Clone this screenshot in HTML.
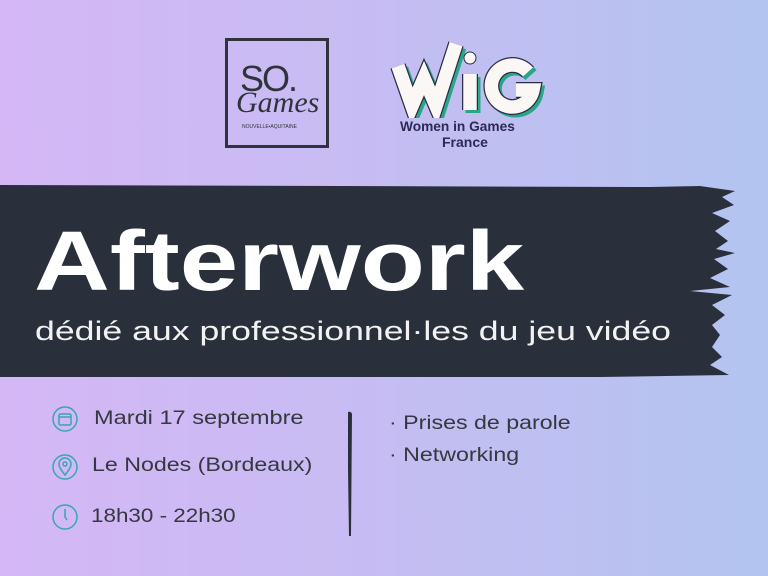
<!DOCTYPE html>
<html><head><meta charset="utf-8"><style>
*{margin:0;padding:0;box-sizing:border-box}
body{width:768px;height:576px;overflow:hidden;position:relative;font-family:"Liberation Sans",sans-serif;background:linear-gradient(90deg,#d5b7f6 0%,#c7bcf3 45%,#b3c4f0 100%)}
.a{position:absolute;white-space:nowrap;transform-origin:0 50%}
.t{color:#363840;font-size:19px;transform:scaleX(1.22)}
</style></head><body>
<!-- SO Games logo -->
<div class="a" style="left:225px;top:38px;width:104px;height:110px;border:3px solid #30333b"></div>
<div class="a" style="left:240px;top:58px;font-size:36px;color:#30333b;letter-spacing:-2px">SO.</div>
<div class="a" style="left:236px;top:86px;font-family:'Liberation Serif',serif;font-style:italic;font-size:30px;color:#30333b">Games</div>
<div class="a" style="left:242px;top:124px;font-size:5px;color:#30333b">NOUVELLE•AQUITAINE</div>
<!-- WiG logo -->
<svg class="a" style="left:388px;top:38px" width="160" height="80" viewBox="0 0 160 80" fill="none" stroke-linejoin="miter" stroke-linecap="butt">
<g stroke="#27a688" stroke-width="15" transform="translate(3,3)">
<polyline points="10,28 24,68 36,40 48,68 68,6"/><line x1="82" y1="36" x2="82" y2="72"/><path d="M140 34 A21 21 0 1 0 145 52 H128"/></g>
<g stroke="#2b2d45" stroke-width="16">
<polyline points="10,28 24,68 36,40 48,68 68,6"/><line x1="82" y1="36" x2="82" y2="72"/><path d="M140 34 A21 21 0 1 0 145 52 H128"/></g>
<g stroke="#fbf7f5" stroke-width="13.5">
<polyline points="10,28 24,68 36,40 48,68 68,6"/><line x1="82" y1="36" x2="82" y2="72"/><path d="M140 34 A21 21 0 1 0 145 52 H128"/></g>
<circle cx="82" cy="20" r="6" fill="#fbf7f5" stroke="#2b2d45" stroke-width="1"/>
</svg>
<div class="a" style="left:400px;top:118px;font-size:14px;font-weight:bold;color:#2b2a55;transform:scaleX(0.98)">Women in Games</div>
<div class="a" style="left:442px;top:134px;font-size:14px;font-weight:bold;color:#2b2a55">France</div>
<!-- banner -->
<svg class="a" style="left:0;top:183px" width="768" height="196" viewBox="0 0 768 196">
<path fill="#2a303b" d="M0 2 L650 4 L700 3 L735 8 L722 14 L734 22 L712 30 L730 38 L715 48 L728 58 L716 66 L735 70 L714 76 L728 86 L710 95 L730 104 L690 108 L732 112 L712 122 L725 132 L712 142 L720 152 L712 164 L722 174 L710 182 L729 192 L600 194 L0 194 Z"/>
</svg>
<div class="a" style="left:34px;font-size:84px;font-weight:bold;color:#fff;line-height:1;transform:translateY(-50%) scaleX(1.25);top:261px">Afterwork</div>
<div class="a" style="left:35px;top:316px;font-size:27px;color:#f2f2f2;transform:scaleX(1.32)">dédié aux professionnel·les du jeu vidéo</div>
<!-- icons -->
<svg class="a" style="left:51px;top:405px" width="28" height="130" viewBox="0 0 28 130" fill="none" stroke="#39a6b2" stroke-width="1.5">
<circle cx="14" cy="14" r="12"/><rect x="8" y="9" width="12" height="11" rx="1.5"/><line x1="8" y1="12" x2="20" y2="12"/>
<circle cx="14" cy="62" r="12"/><path d="M14 70c-4-5-6-8-6-11a6 6 0 0 1 12 0c0 3-2 6-6 11z"/><circle cx="14" cy="59" r="2"/>
<circle cx="14" cy="112" r="12"/><path d="M14 104v8l2 3"/>
</svg>
<div class="a t" style="left:94px;top:408px;transform:scaleX(1.24)">Mardi 17 septembre</div>
<div class="a t" style="left:92px;top:455px">Le Nodes (Bordeaux)</div>
<div class="a t" style="left:91px;top:506px;transform:scaleX(1.18)">18h30 - 22h30</div>
<svg class="a" style="left:345px;top:410px" width="10" height="128"><path d="M3 2 Q6 1 7 4 L6 126 L4 126 L3 60 Z" fill="#2a303b"/></svg>
<div class="a t" style="left:389px;top:413px">· Prises de parole</div>
<div class="a t" style="left:389px;top:445px">· Networking</div>
</body></html>
